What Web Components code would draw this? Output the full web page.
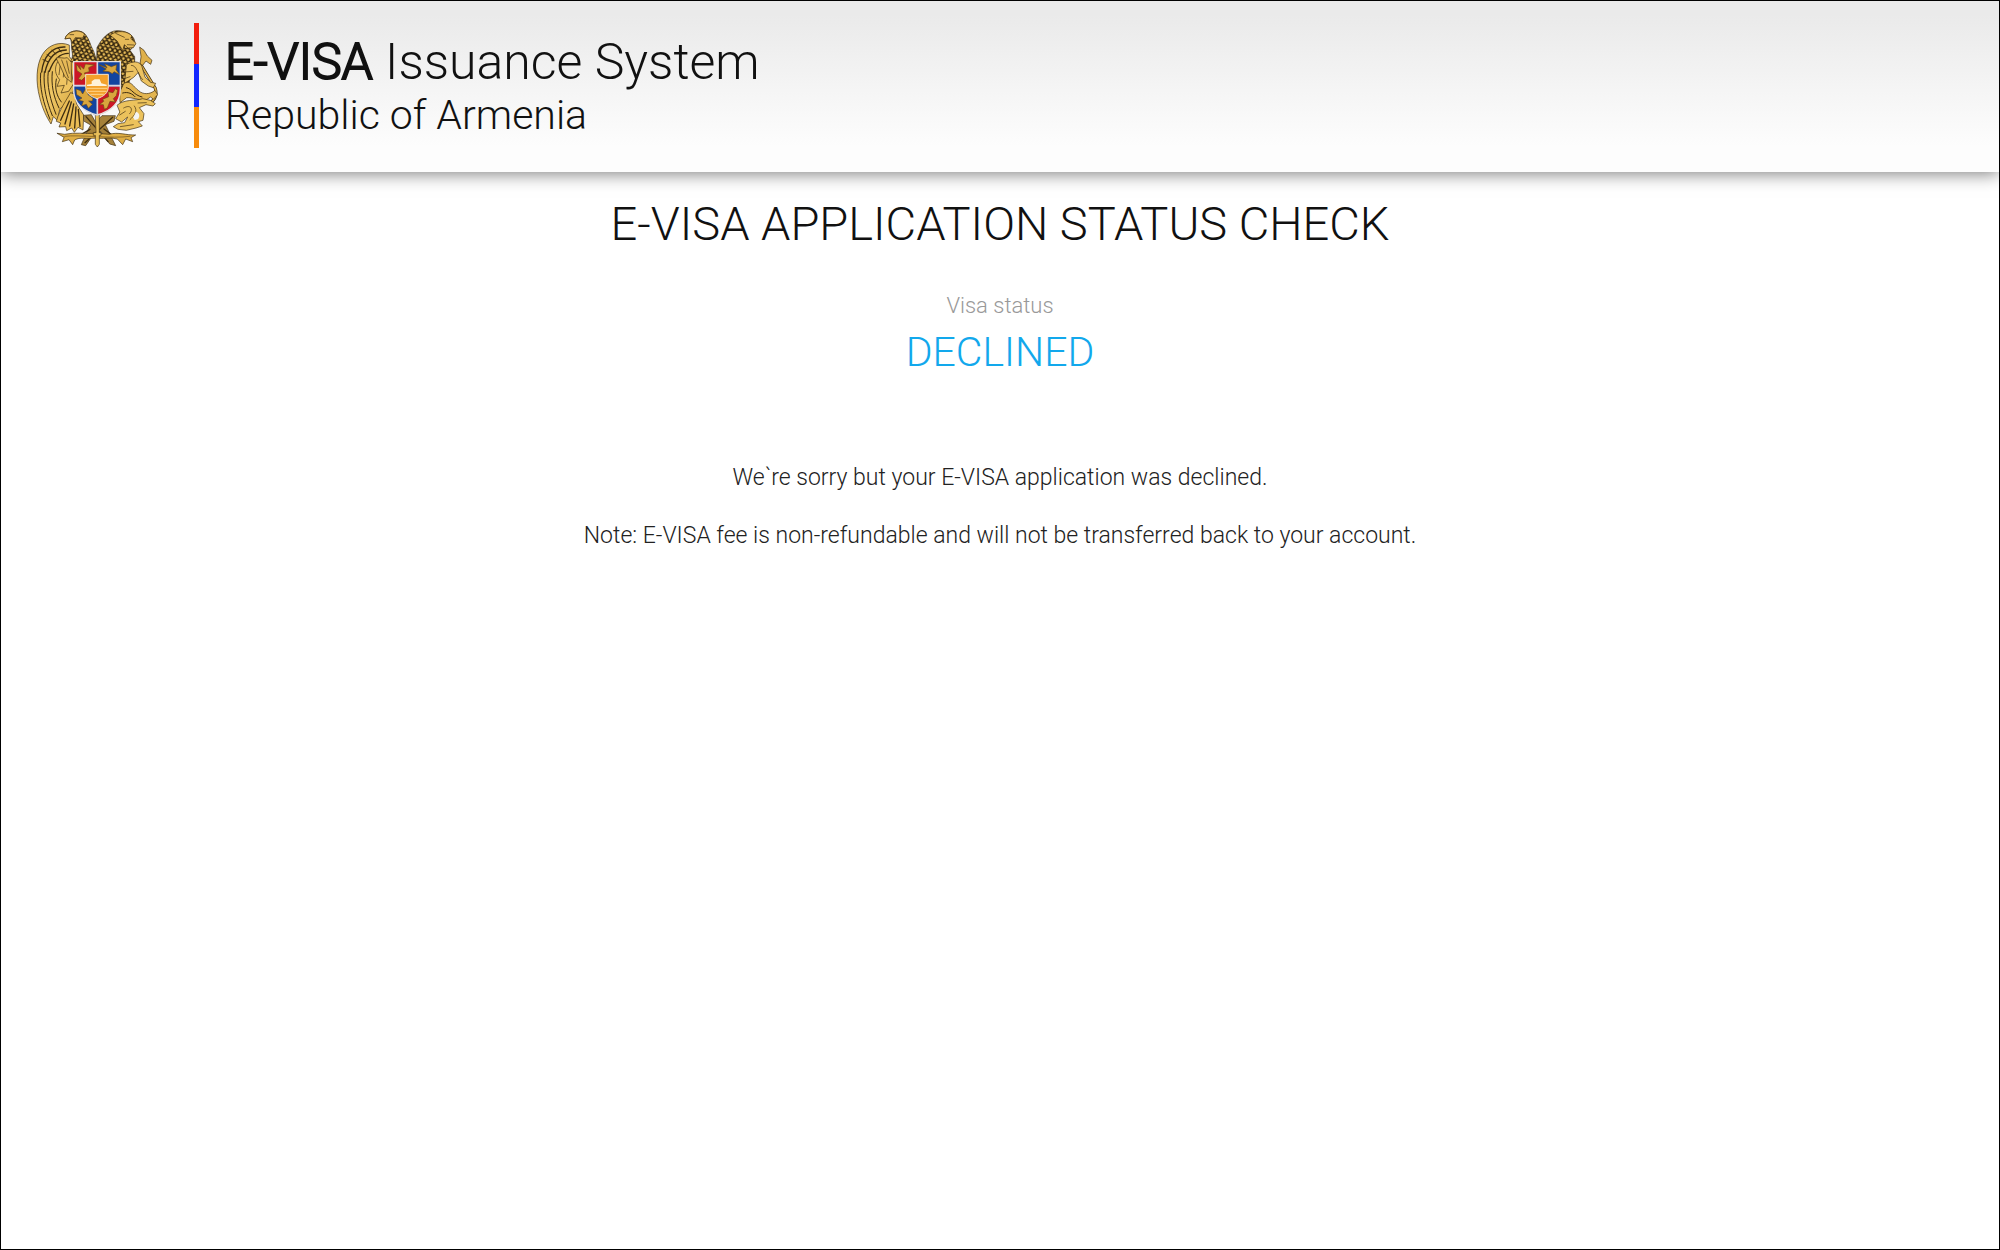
<!DOCTYPE html>
<html lang="en">
  <head>
    <meta charset="UTF-8" />
    <meta name="viewport" content="width=device-width, initial-scale=1" />
    <title>E-VISA Issuance System</title>
    <style>
      * {
        box-sizing: border-box;
      }
      body {
        margin: 0;
        min-height: 100vh;
        border: 1px solid #000;
        background: #fff;
        color: #111;
        font-family: Roboto, "Liberation Sans", sans-serif;
        font-weight: 300;
      }
    </style>
  </head>
  <body>
    <site-header>
      <strong slot="name">E-VISA</strong>
      <span slot="system">Issuance System</span>
      <span slot="country">Republic of Armenia</span>
    </site-header>
    <status-page>
      <span slot="title">E-VISA APPLICATION STATUS CHECK</span>
      <visa-status label="Visa status">DECLINED</visa-status>
      <status-note>
        <p>We`re sorry but your E-VISA application was declined.</p>
        <p>
          Note: E-VISA fee is non-refundable and will not be transferred back to
          your account.
        </p>
      </status-note>
    </status-page>
  </body>
  <script>
    // Coat of arms
    class StateEmblem extends HTMLElement {
      constructor() {
        super();
        this.attachShadow({ mode: "open" }).innerHTML = `
          <style>
            :host {
              display: block;
              flex: none;
              width: 122px;
            }
            svg {
              display: block;
              width: 100%;
            }
          </style>
          <svg viewBox="47 44 366 356" role="img" aria-label="Coat of arms of Armenia">
            <defs>
              <linearGradient id="gold" x1="0" y1="0" x2="1" y2="1">
                <stop offset="0" stop-color="#d9ab45" />
                <stop offset=".5" stop-color="#efc765" />
                <stop offset="1" stop-color="#d0a03a" />
              </linearGradient>
              <pattern id="scales" width="15" height="18" patternUnits="userSpaceOnUse" patternTransform="rotate(12)">
                <rect width="15" height="18" fill="#e9bd58" />
                <path d="M1 1q1 8 7 8q5-1 6-8M-7 10q2 8 8 8q5-1 6-8M8 10q2 8 7 8q6-1 7-8" fill="none" stroke="#2b1e0b" stroke-width="4" />
              </pattern>
              <clipPath id="shield">
                <path d="M160 142H300V224C300 266 270 291 230 304C190 291 160 266 160 224Z" />
              </clipPath>
            </defs>
            <g stroke="#3d2c10" stroke-width="2" stroke-linejoin="round" stroke-linecap="round">
              <!-- eagle wing -->
              <path fill="url(#gold)" d="M146 92C118 80 84 91 66 121C47 153 46 204 58 249C66 283 79 309 92 329L99 307L111 318L118 286L151 250L168 208L160 144L148 128Z" />
              <path fill="none" stroke-width="4" d="M134 98C95 96 69 127 64 173M138 107C103 108 82 135 74 174M144 117C116 117 98 140 87 171" />
              <path fill="none" stroke-width="3" d="M61 176C57 219 69 267 89 315M72 172C68 219 79 262 96 304M84 170C78 214 91 259 107 300M96 172C92 211 99 246 116 281M108 194C102 224 110 246 123 263M68 136L82 142M80 121L94 130M95 108L107 120M114 101L122 113" />
              <path fill="#efc562" d="M111 144C101 163 105 181 118 196L110 216L132 213L122 236L145 231L160 208L151 165L137 135Z" />
              <path fill="none" d="M120 150L116 181M132 145L129 188M143 163L139 210" />
              <!-- tail feathers -->
              <path fill="#e9bc55" d="M150 236C136 262 120 280 108 321L121 326L116 338L136 337L139 349L154 341L162 354L173 339L188 347L190 302L169 269L163 240Z" />
              <path fill="none" stroke-width="4" d="M147 260L121 318M153 263L134 329M160 269L148 335M167 278L163 341M174 285L179 336" />
              <!-- swords, branches and ribbon under the shield -->
              <path fill="#a5813a" d="M191 303L213 301L226 324L245 304L285 304L281 321L255 331L277 376L286 394L268 389L242 352L224 353L196 394L183 391L201 350L211 332L192 321Z" />
              <path fill="none" stroke-width="4" d="M197 307L263 382M277 309L194 385M209 345L182 361M251 344L279 365" />
              <path fill="#dfae45" d="M111 357L133 360C165 353 191 359 226 357L267 360C293 352 317 363 346 362L332 370L337 382L316 374L307 391L291 374C267 367 247 375 229 371C194 375 181 367 163 377L157 391L146 376L126 382L131 370Z" />
              <path fill="none" stroke="#6a4d19" d="M133 366C175 360 276 374 329 366" />
              <path fill="#e9bf59" d="M226 300H237V355H242V363H237V390L231 398L225 390V363H219V355H226Z" />
              <!-- eagle head and neck -->
              <path fill="url(#scales)" d="M150 142C164 122 151 110 154 89L151 72L134 73C140 49 177 41 195 60C209 78 208 90 220 111L230 142Z" />
              <path fill="#e8bc5d" d="M134 73C140 50 176 42 193 59L187 71L165 70L156 84L150 72Z" />
              <path fill="none" d="M149 61L160 61" />
              <path fill="#e5b957" d="M108 131C116 127 130 134 141 130L153 144L153 204L134 188L120 156Z" />
              <path fill="none" d="M124 137L144 190M139 140L147 177" />
              <!-- lion head and mane -->
              <path fill="url(#scales)" d="M229 142L230 100C244 73 264 50 290 49C323 49 346 65 344 92L329 108L343 127L343 155L324 210L303 224L301 143Z" />
              <path fill="#e6ba58" d="M270 62C291 45 324 51 335 65L331 72L347 87L339 100L323 101L312 91L307 109L291 81Z" />
              <path fill="none" d="M286 57L312 69M315 75L325 75M321 91L340 92" />
              <!-- sceptre, with the background showing inside its arc -->
              <path fill="none" stroke-width="9" d="M361 150L404 220Q414 246 392 264" />
              <path fill="none" stroke="#dfb04a" stroke-width="5" d="M361 150L404 220Q414 246 392 264" />
              <path fill="#dfb04a" d="M359 99L371 108L381 125L395 138L391 150L377 140L367 153L359 149L362 128Z" />
              <!-- lion forelegs -->
              <path fill="#ecc261" d="M319 151C334 139 360 139 365 157L374 188L391 204L406 207L399 220L384 215L363 200L354 174L340 189L313 207Z" />
              <path fill="none" d="M333 153C350 152 351 180 367 196M312 173L338 171M309 194L329 187" />
              <path fill="#e3b550" d="M311 207C331 195 339 218 355 229C367 241 389 241 404 228L412 241L399 255L391 248L377 257C350 257 337 249 319 250L299 265L298 236Z" />
              <path fill="none" stroke-width="3" d="M318 220C335 223 339 242 365 248M307 236C323 231 337 239 344 247" />
              <!-- lion hind legs and tail -->
              <path fill="#ecc25c" d="M291 272C311 254 345 260 367 253L390 258L405 268L398 275L377 271L357 280L371 298L368 318L354 322L366 335L347 341L318 348L293 345L279 337L293 328L313 325L322 308L304 323L286 313L298 294Z" />
              <path fill="none" d="M310 281C332 268 340 286 328 298M342 275C354 290 342 304 329 316M298 302L315 291M300 337L339 331M353 266L378 265" />
              <path fill="#f4f4f4" stroke="none" d="M347 292C358 296 360 305 352 315L343 317L339 309Z" />
            </g>
            <!-- shield -->
            <g clip-path="url(#shield)">
              <path fill="#cc1626" d="M160 142H231V216H160ZM231 216H302V306H231Z" />
              <path fill="#13449f" d="M231 142H302V216H231ZM160 216H231V306H160Z" />
              <g fill="#d9a63d" stroke="#6e4a16" stroke-width="2">
                <path d="M168 149L181 166L178 153L190 164L195 149L222 152L205 160L207 172L192 176L197 185L184 198L174 193L185 179L170 169Z" />
                <path d="M236 151L260 160L253 148L273 157L289 151L287 166L298 181L281 172L276 178L266 172L248 170L258 164Z" />
                <path d="M167 224L181 229L187 239L196 223L204 242L218 252L216 260L205 260L216 270L204 282L198 270L184 274L189 261L174 258L185 251L169 241Z" />
                <path d="M247 255L265 247L263 232L278 235L285 223L292 228L288 244L279 253L285 263L269 261L261 281L252 285L249 271L237 271L250 261Z" />
              </g>
              <path fill="none" stroke="#d5d4df" stroke-width="5" d="M231 142V180M231 248V304M160 214H196M264 214H302" />
            </g>
            <path fill="none" stroke="#e4e0e0" stroke-width="4" d="M160 142H300V224C300 266 270 291 230 302C190 291 160 266 160 224Z" />
            <path fill="#f3a12b" stroke="#f5e6cf" stroke-width="3" d="M196 180H264V216C264 236 251 246 230 253C209 246 196 236 196 216Z" />
            <path fill="#fff2d9" d="M200 215V211L214 209V201L223 195H238L243 207L259 211V215Z" />
            <path fill="none" stroke="#ffd68c" stroke-width="3" d="M199 222H261M202 231H258M210 240H250" />
          </svg>
        `;
      }
    }
    customElements.define("state-emblem", StateEmblem);

    // Top bar: emblem, flag stripe and the site name
    class SiteHeader extends HTMLElement {
      constructor() {
        super();
        this.attachShadow({ mode: "open" }).innerHTML = `
          <style>
            :host {
              display: block;
              background: linear-gradient(#eaeaea 8%, #fdfdfd 85%);
              box-shadow: 0 2px 16px rgba(0, 0, 0, 0.5);
            }
            header {
              display: flex;
              align-items: center;
              padding: 22px 35px 24px;
            }
            state-emblem {
              align-self: flex-end;
            }
            .flag {
              flex: none;
              width: 5px;
              height: 125px;
              margin: 0 26px 0 36px;
              background: linear-gradient(#f21d0d 33%, #1226ff 33% 67%, #f78b0c 67%);
            }
            .name {
              font-size: 50px;
              line-height: 58px;
            }
            .country {
              font-size: 41px;
              line-height: 48px;
            }
            /* light letters thickened, so the name keeps its narrow set */
            ::slotted(strong) {
              font-weight: 300;
              -webkit-text-stroke: 2px currentColor;
            }
          </style>
          <header>
            <state-emblem></state-emblem>
            <div class="flag"></div>
            <div>
              <div class="name"><slot name="name"></slot> <slot name="system"></slot></div>
              <div class="country"><slot name="country"></slot></div>
            </div>
          </header>
        `;
      }
    }
    customElements.define("site-header", SiteHeader);

    // Status label with its value
    class VisaStatus extends HTMLElement {
      constructor() {
        super();
        this.attachShadow({ mode: "open" }).innerHTML = `
          <style>
            :host {
              display: flex;
              flex-direction: column;
              gap: 8px;
            }
            .label {
              color: #999;
              font-size: 22px;
              line-height: 28px;
            }
            .value {
              color: #12a8ec;
              font-size: 41px;
              line-height: 48px;
            }
          </style>
          <div class="label"></div>
          <div class="value"><slot></slot></div>
        `;
      }
      connectedCallback() {
        this.shadowRoot.querySelector(".label").textContent =
          this.getAttribute("label");
      }
    }
    customElements.define("visa-status", VisaStatus);

    // Explanation under the status
    class StatusNote extends HTMLElement {
      constructor() {
        super();
        this.attachShadow({ mode: "open" }).innerHTML = `
          <style>
            :host {
              display: flex;
              flex-direction: column;
              gap: 30px;
              margin-top: 48px;
              color: #222;
              font-size: 23px;
              line-height: 28px;
            }
            ::slotted(p) {
              margin: 0;
            }
          </style>
          <slot></slot>
        `;
      }
    }
    customElements.define("status-note", StatusNote);

    // Page content
    class StatusPage extends HTMLElement {
      constructor() {
        super();
        this.attachShadow({ mode: "open" }).innerHTML = `
          <style>
            :host {
              display: block;
            }
            main {
              display: flex;
              flex-direction: column;
              gap: 40px;
              padding: 24px;
              text-align: center;
            }
            h1 {
              margin: 0;
              font-size: 47px;
              font-weight: 300;
              line-height: 56px;
            }
          </style>
          <main>
            <h1><slot name="title"></slot></h1>
            <slot></slot>
          </main>
        `;
      }
    }
    customElements.define("status-page", StatusPage);
  </script>
</html>
